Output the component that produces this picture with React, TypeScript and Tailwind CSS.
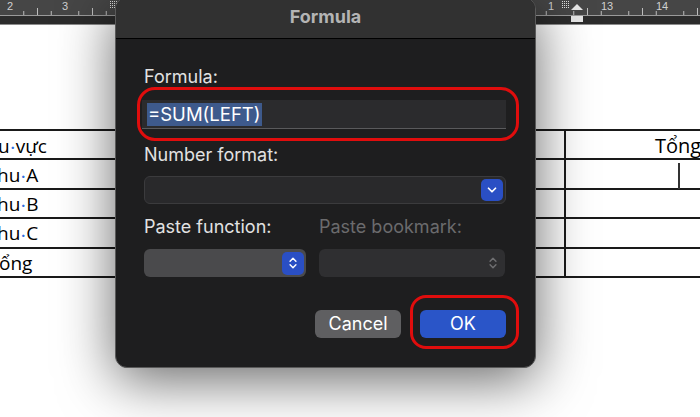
import { ChevronDown, ChevronsUpDown } from "lucide-react";

const Dot = () => <span className="text-[#2f6fe0] font-bold text-[14px] align-middle mx-[1px]">·</span>;

const Ruler = () => {
  const ticks: { x: number; h: number }[] = [];
  for (let i = -2; i < 60; i++) {
    const x = 10 + i * 13.75;
    if (i % 4 === 0) continue;
    ticks.push({ x, h: i % 2 === 0 ? 7 : 4 });
  }
  return (
    <div className="h-[25px] flex flex-col bg-[#2c2c2c] border-b border-[#8c8c8c]">
      <svg width="700" height="16" className="block bg-[#464646]">
        {ticks.map((t, i) => (
          <line key={i} x1={t.x} x2={t.x} y1={15} y2={15 - t.h} stroke="#bdbdbd" strokeWidth="1" />
        ))}
        <line x1="0" x2="700" y1="15.5" y2="15.5" stroke="#9a9a9a" strokeWidth="1" />
        <text x="10" y="10" fill="#d0d0d0" fontSize="11" textAnchor="middle" fontFamily="Liberation Sans">2</text>
        <text x="65" y="10" fill="#d0d0d0" fontSize="11" textAnchor="middle" fontFamily="Liberation Sans">3</text>
        <text x="551" y="10" fill="#d0d0d0" fontSize="11" textAnchor="middle" fontFamily="Liberation Sans">1</text>
        <text x="607" y="10" fill="#d0d0d0" fontSize="11" textAnchor="middle" fontFamily="Liberation Sans">13</text>
        <text x="662" y="10" fill="#d0d0d0" fontSize="11" textAnchor="middle" fontFamily="Liberation Sans">14</text>
        {[0, 1, 2, 3].map((r) =>
          [0, 1, 2, 3].map((c) => (
            <rect key={`${r}-${c}`} x={110 + c * 2} y={1 + r * 2} width="1" height="1" fill="#e0e0e0" />
          ))
        )}
        {[0, 1, 2, 3].map((r) =>
          [0, 1, 2, 3].map((c) => (
            <rect key={`b${r}-${c}`} x={562 + c * 2} y={1 + r * 2} width="1" height="1" fill="#e0e0e0" />
          ))
        )}
      </svg>
      <svg width="700" height="8" className="block">
        <polygon points="571,0 583,0 583,6 571,6" fill="#e6e6e6" />
      </svg>
      <svg width="20" height="12" className="absolute left-[567px] top-[4px]">
        <polygon points="10,0 16,6 4,6" fill="#e6e6e6" />
      </svg>
    </div>
  );
};

const Row = ({ left, shift, right, cursor }: { left: React.ReactNode; shift: string; right?: string; cursor?: boolean }) => (
  <div className="grid grid-cols-[564px_1fr] h-[29.4px] border-b-2 border-[#1a1a1a]">
    <div className={`flex items-center ${shift} text-[19px] text-black`}>{left}</div>
    <div className="border-l-2 border-[#1a1a1a] flex items-center text-[19px] text-black">
      {right && <span className="ml-[89px] text-[20px]">{right}</span>}
      {cursor && <span className="ml-[112px] w-[2px] h-[26px] mt-[3px] bg-[#333]" />}
    </div>
  </div>
);

const Dialog = () => (
  <div className="absolute left-[115px] top-[-3px] w-[421px] h-[371px] rounded-[12px] bg-[#1e1e1f] border border-[#5a5a5a] shadow-[0_12px_55px_rgba(0,0,0,0.6)] overflow-hidden font-['Inter',sans-serif]">
    <div className="h-[41px] bg-[#313131] border-b border-black flex items-center justify-center pb-[3px]">
      <span className="text-[18px] font-bold text-[#b4b4b4]">Formula</span>
    </div>
    <div className="px-[28px] pr-[29px] text-[#e2e2e2] text-[18px] leading-[22px]">
      <div className="mt-[27px]">Formula:</div>
      <div className="relative mt-[12px] h-[29px] bg-[#2b2b2d] border-b border-[#5a5a5c] flex items-center pl-[5px] -ml-[2px]">
        <span className="bg-[#3e5a8c] text-white px-[1px] leading-[23px] text-[18.5px]">=SUM(LEFT)</span>
        <div className="absolute -left-[5px] -right-[13px] -top-[13px] -bottom-[13px] border-[3px] border-[#e00d0d] rounded-[18px]" />
      </div>
      <div className="mt-[15px]">Number format:</div>
      <div className="mt-[10px] h-[28px] rounded-[6px] bg-[#29292b] border border-[#3b3b3d] flex items-center justify-end pr-[2px]">
        <span className="w-[22px] h-[22px] rounded-[5px] bg-[#2a4fc4] flex items-center justify-center">
          <ChevronDown size={14} strokeWidth={3} color="white" />
        </span>
      </div>
      <div className="mt-[12px] flex">
        <span className="w-[175px]">Paste function:</span>
        <span className="text-[#6b6b6d]">Paste bookmark:</span>
      </div>
      <div className="mt-[11px] flex">
        <div className="w-[162px] h-[28px] rounded-[6px] bg-[#4a4a4c] flex items-center justify-end pr-[2px]">
          <span className="w-[22px] h-[23px] rounded-[5px] bg-[#2a4fc4] flex items-center justify-center">
            <ChevronsUpDown size={14} strokeWidth={2.5} color="white" />
          </span>
        </div>
        <div className="ml-[13px] w-[186px] h-[28px] rounded-[6px] bg-[#2f2f31] flex items-center justify-end pr-[5px]">
          <ChevronsUpDown size={14} strokeWidth={2.5} color="#6f6f71" />
        </div>
      </div>
      <div className="mt-[33px] flex justify-end gap-[19px]">
        <button className="w-[86px] h-[28px] rounded-[6px] bg-[#5f5f61] text-white text-[18px]">Cancel</button>
        <div className="relative">
          <button className="w-[86px] h-[28px] rounded-[6px] bg-[#2a55c8] text-white text-[18px]">OK</button>
          <div className="absolute -left-[10px] -right-[13px] -top-[15px] -bottom-[11px] border-[3px] border-[#e00d0d] rounded-[16px]" />
        </div>
      </div>
    </div>
  </div>
);

export default function App() {
  return (
    <div className="relative w-[700px] h-[417px] overflow-hidden bg-white">
      <Ruler />
      <div className="pt-[104px] font-['Open_Sans',sans-serif]">
        <div className="border-t-2 border-[#1a1a1a]">
          <Row left={<span>u<Dot />vực</span>} shift="-ml-[2px]" right="Tổng" />
          <Row left={<span>hu<Dot />A</span>} shift="-ml-[3px]" cursor />
          <Row left={<span>hu<Dot />B</span>} shift="-ml-[3px]" />
          <Row left={<span>hu<Dot />C</span>} shift="-ml-[3px]" />
          <Row left={<span>ổng</span>} shift="-ml-[1px]" />
        </div>
      </div>
      <Dialog />
    </div>
  );
}
